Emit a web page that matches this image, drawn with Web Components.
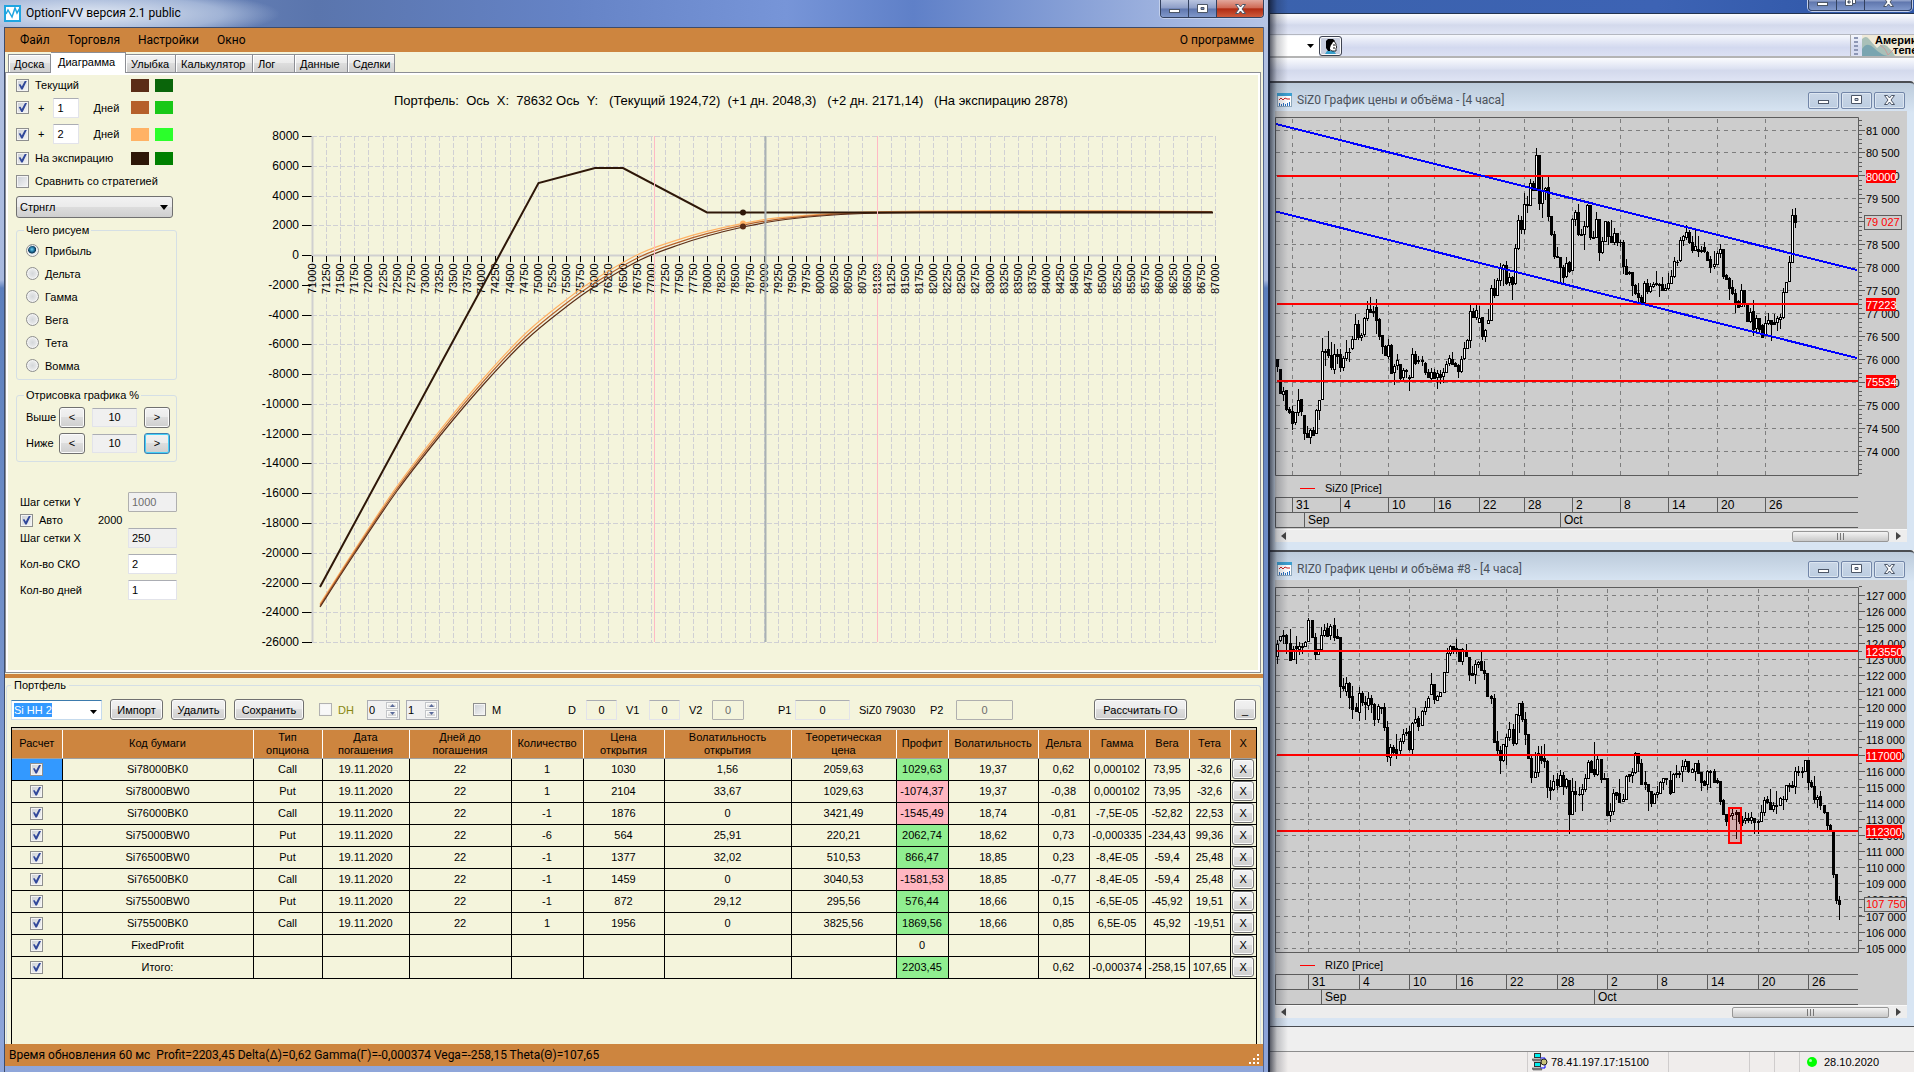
<!DOCTYPE html>
<html lang="ru">
<head>
<meta charset="utf-8">
<title>OptionFVV</title>
<style>
html,body{margin:0;height:100%;background:#efefef;overflow:hidden}
body{font:11px/14px "Liberation Sans",Arial,sans-serif;color:#000}
</style>
</head>
<body>
<trade-desktop></trade-desktop>
<script>
const BASE = `
*{box-sizing:border-box}
button,input,select{font:inherit;color:inherit;margin:0}
button{height:21px;padding:0 2px;border:1px solid #707070;border-radius:3px;background:linear-gradient(#f2f2f2,#ebebeb 48%,#dddddd 50%,#cfcfcf);box-shadow:inset 0 0 0 1px #fbfbfb;text-align:center;white-space:nowrap}
input[type=text]{height:20px;border:1px solid #e2e3ea;border-top-color:#abadb3;background:#fff;padding:0 3px;border-radius:1px;min-width:0}
input[readonly]{background:#f0f0f0}
input[disabled]{background:#f0f0f0;border-color:#afafaf;color:#6d6d6d}
input[type=checkbox]{appearance:none;flex:none;width:13px;height:13px;border:1px solid #8e8f8f;background:linear-gradient(135deg,#cbcfd5,#f6f6f6);box-shadow:inset 0 0 0 1px #f4f4f4;display:grid;place-items:center}
input[type=checkbox]:checked::before{content:"";width:9px;height:9px;background:#30479a;clip-path:polygon(8% 45%,28% 42%,42% 66%,78% 0,100% 0,52% 100%,36% 100%)}
input[type=checkbox]:disabled{background:#f8f8f8;border-color:#b1b1b1}
input[type=radio]{appearance:none;flex:none;width:13px;height:13px;border:1px solid #8e8f8f;border-radius:50%;background:radial-gradient(#d4d7da,#f7f7f7);box-shadow:inset 0 0 0 1px #f4f4f4}
input[type=radio]:checked{background:radial-gradient(circle at 45% 40%,#6fd2f5 0,#1c6a94 28%,#0b3350 42%,#e8eef2 50%)}
`;
function component(tag, css, render, after){
  customElements.define(tag, class extends HTMLElement{
    constructor(){super();this.attachShadow({mode:"open"})}
    connectedCallback(){
      this.shadowRoot.innerHTML = `<style>${BASE}${css}</style>` + (typeof render==="function"?render(this):render);
      if(after) after(this);
    }
  });
}

/* ---------- small controls ---------- */
component("win-check", `:host{display:inline-flex}label{display:flex;align-items:center;gap:6px;white-space:nowrap}.off{color:#87870f}`, el=>
  `<label class="${el.hasAttribute("off")?"off":""}"><input type="checkbox" ${el.hasAttribute("on")?"checked":""} ${el.hasAttribute("off")?"disabled":""}><slot></slot></label>`);

component("value-field", `:host{display:inline-flex}label{display:flex;align-items:center;justify-content:space-between;width:100%;white-space:nowrap}
 input[type=text]{width:var(--w,49px);text-align:var(--align,left);background:var(--fill,#fff)}`, el=>
  `<label><slot></slot><input type="text" value="${el.getAttribute("value")}" ${el.getAttribute("state")||""}></label>`);

component("spin-box", `:host{display:inline-flex;width:33px;height:20px;border:1px solid #abadb3;background:#f0f0f0}
 input[type=text]{flex:1;width:10px;height:18px;border:0;padding:0 1px;background:none}
 .b{display:flex;flex-direction:column;width:14px;gap:1px;padding:1px}
 .b button{flex:1;height:auto;padding:0;border-radius:0;border-color:#c3c5c9;display:grid;place-items:center}
 svg{display:block}`, el=>
  `<input type="text" aria-label="${el.getAttribute("label")}" value="${el.getAttribute("value")}"><div class="b"><button aria-label="+"><svg width="5" height="3"><path d="M0 3L2.5 0L5 3z" fill="#5a6a9a"/></svg></button><button aria-label="-"><svg width="5" height="3"><path d="M0 0L2.5 3L5 0z" fill="#5a6a9a"/></svg></button></div>`);

/* ---------- caption buttons ---------- */
const G_MIN = '<svg width="13" height="12"><rect x="1.5" y="6.500" width="10" height="3" fill="#fff" stroke="#4c5667"/></svg>';
const G_MAX = '<svg width="13" height="12"><path d="M1.500 1.500h10v8h-10z M5 4.500h3v2h-3z" fill="#fff" fill-rule="evenodd" stroke="#4c5667"/></svg>';
const G_REST = '<svg width="13" height="12"><path d="M4.500 .5h7v7h-7z" fill="#fff" stroke="#4c5667"/><path d="M1.500 2.500h7v7h-7z M4 5h2v2h-2z" fill="#fff" fill-rule="evenodd" stroke="#4c5667"/></svg>';
const G_X = '<svg width="13" height="12"><path d="M1.500 1.500h3l2 2.500l2-2.500h3l-3.500 4.500l3.500 4.500h-3l-2-2.500l-2 2.500h-3l3.500-4.500z" fill="#fff" stroke="#4c5667"/></svg>';
component("caption-buttons", `:host{display:flex}
 button{display:grid;place-items:center;padding:0}
 .aero{display:flex;height:18px;border:1px solid #33415f;border-top:0;border-radius:0 0 4px 4px;overflow:hidden;box-shadow:0 0 0 1px #c3d0ec}
 .aero button{height:17px;border:0;border-radius:0;width:28px;background:linear-gradient(#b9c5e0,#8c9dc7 48%,#5f76ad 52%,#8098cb);box-shadow:none;border-right:1px solid #33415f}
 .aero button:last-child{width:46px;border:0}
 .aero button.red{background:linear-gradient(#e2a79b,#cf6a55 46%,#b02b13 52%,#cf5b3c)}
 .mdi{display:flex;gap:2px}
 .mdi button{width:31px;height:17px;border:1px solid #7286a8;border-radius:2px;background:linear-gradient(#c9d6e6,#bccde1);box-shadow:inset 0 0 0 1px #dce6f1}`, el=>{
  const k = el.getAttribute("kind");
  return `<div class="${k==="mdi"?"mdi":"aero"}"><button aria-label="Свернуть">${G_MIN}</button><button aria-label="Развернуть">${k==="back"?G_REST:G_MAX}</button><button aria-label="Закрыть" class="${k==="main"?"red":""}">${G_X}</button></div>`;});

/* ---------- payoff diagram ---------- */
function smooth(p){
  let d=`M${p[0]}`;
  for(let i=0;i<p.length-1;i++){
    const a=p[i-1]||p[i],b=p[i],c=p[i+1],e=p[i+2]||c;
    d+=`C${b[0]+(c[0]-a[0])/6} ${b[1]+(c[1]-a[1])/6} ${c[0]-(e[0]-b[0])/6} ${c[1]-(e[1]-b[1])/6} ${c[0]} ${c[1]}`;
  }
  return d;
}
component("payoff-chart", `:host{display:block;min-width:0;min-height:0}svg{display:block;width:100%;height:100%}text{font-size:12px;white-space:pre}.x{font-size:11px}.t{font-size:13px}`, ()=>{
  const X=v=>312+(v-71000)/250*14.115, Y=v=>136+(8000-v)/2000*29.77;
  let s='';
  for(let v=71000;v<=87000;v+=250) s+=`<path d="M${Math.round(X(v))+.5} 136V642" stroke="#d0d0d4" stroke-dasharray="5 2"/>`;
  for(let v=8000;v>=-26000;v-=2000){const y=Math.round(Y(v))+.5;
    s+=`<path d="M312 ${y}H1216" stroke="#d0d0d4" stroke-dasharray="5 2"/><path d="M302 ${y}H312" stroke="#000"/><text x="299" y="${y+3.5}" text-anchor="end">${v}</text>`;}
  s+=`<path d="M312.500 136V642M312 255.500H1216" stroke="#d0d0d0" stroke-width="2"/>`;
  for(let v=71000;v<=87000;v+=250){const x=Math.round(X(v))+.5;
    s+=`<path d="M${x} 256V262" stroke="#000"/><text class="x" transform="translate(${x+3.5} 294) rotate(-90)">${v}</text>`;}
  const now=[[320,607],[355,553],[397,491],[439,437],[483,385],[526,340],[566,307],[594,287],[640,260],[680,244.5],[707,236],[743,227],[775,221],[820,216],[864,213.5],[920,212.5],[1035,212],[1212,212]];
  const gap=x=>x<520?3+(x-320)*.02:x<620?7:x<900?Math.max(1.5,7-(x-620)*.027):x<1040?1.5:.3;
  const p1=now.map(([x,y])=>[x,y-gap(x)/2]);
  const p2=now.map(([x,y])=>[x,y-gap(x)]);
  s+=`<g fill="none"><path d="${smooth(p2)}" stroke="#ffb265" stroke-width="1.200"/><path d="${smooth(p1)}" stroke="#b5602b" stroke-width="1.200"/><path d="${smooth(now)}" stroke="#5a2d17" stroke-width="1.200"/>
   <path d="M320 587L538.500 183L595 168H623L707 212.500H1213" stroke="#2e1708" stroke-width="2"/></g>
   <path d="M654.500 136V642M877.500 136V642" stroke="#ffb9c4"/><path d="M765.500 136V642" stroke="#a9b1b3" stroke-width="2"/>
   <circle cx="743" cy="223.500" r="3" fill="#ffb265"/><circle cx="743" cy="226.500" r="3" fill="#5a2d17"/><circle cx="743" cy="212.500" r="3" fill="#2e1708"/>
   <text class="t" x="394" y="105">Портфель:  Ось  X:  78632 Ось  Y:   (Текущий 1924,72)  (+1 дн. 2048,3)   (+2 дн. 2171,14)   (На экспирацию 2878)</text>`;
  return `<svg viewBox="180 75 1077 594" preserveAspectRatio="xMinYMin meet">${s}</svg>`;
});

/* ---------- candle charts ----------
   Each bar: fill flag, high, body top, body bottom, low in third-pixel units; "+" widens the step by one pixel. */
const SI = `b657 657 678 697,b687 687 760 763,w742 754 764 783,b750 750 808 815,b802 808 816 824,b798 815 850 872,w817 817 848 857,w747 780 817 828,b777 777 815 830,b825 825 880 900,b858 880 892 895,w868 870 892 912,b861 870 886 888,w807 812 880 882,w780 782 811 840,w594 634 779 779,b627 634 636 680,b573 627 647 655,b606 645 682 690,w612 643 687 702,b627 642 648 673,b627 642 682 696,w650 655 682 695,w600 637 655 665,b625 636 638 668,w588 598 626 630,w522 553 598 602,b540 552 593 600,w579 586 591 603,w531 535 583 591,w483 508 536 543,b471 507 516 520,b500 513 516 531,b477 502 540 582,b535 537 590 600,b585 585 620 642,b617 618 647 650,w597 615 648 657,b612 615 700 702,w672 680 697 735,w642 661 676 690,b672 673 715 720,w685 691 711 725,b688 690 694 714,b705 711 716 753,w624 643 712 715,b633 642 671 675,b650 660 665 672,+,b650 662 665 680,b667 669 697 705,b687 696 712 715,w685 698 714 720,b687 698 715 718,w690 701 712 747,b690 702 711 732,w685 698 708 730,w663 672 696 700,w645 656 671 680,b637 657 672 676,b666 671 678 682,b674 676 695 714,w648 657 695 700,w606 626 655 660,w597 600 625 628,w494 513 601 625,b504 513 532 535,w490 510 531 542,w500 535 546 550,b532 533 590 601,w567 571 589 606,w507 542 550 552,w435 446 541 545,b417 444 467 475,w414 420 467 470,w370 385 420 440,w372 376 388 440,b363 375 429 437,w400 412 428 440,b408 411 432 480,w312 325 431 435,w225 241 325 330,b228 240 267 282,w159 193 269 283,b168 193 196 220,w117 130 196 198,b125 131 150 153,w24 46 150 152,b45 45 190 210,w108 150 190 234,w141 144 152 180,b108 141 228 244,b228 228 284 290,b273 283 350 357,b321 348 352 356,b351 351 382 430,b375 382 411 432,w351 370 410 415,b364 366 393 400,w234 238 391 393,w210 217 238 258,b192 218 284 288,b268 282 285 285,w243 259 284 330,w192 196 260 264,b195 195 293 300,b275 292 296 297,w216 238 292 295,b237 237 338 363,w291 304 338 344,w243 244 304 307,b244 246 290 315,b240 289 307 310,w264 280 307 316,b279 280 308 320,b302 306 308 322,b302 306 380 402,b357 378 402 406,b393 397 399 405,b396 397 436 468,b433 436 461 465,b430 460 472 488,b465 471 487 490,w423 430 486 490,b417 431 455 462,w429 439 453 460,w426 433 440 444,b393 430 434 440,b430 433 435 471,b411 433 452 455,w433 446 451 453,w399 430 445 450,w390 409 430 434,w351 364 409 414,b360 366 368 380,w291 301 361 366,w285 290 301 318,w255 277 291 300,b270 277 308 312,b290 307 331 340,w267 319 331 333,b288 329 333 353,b320 330 334 340,b306 322 335 340,b333 336 360 362,b350 357 381 399,+,w333 373 380 387,w333 341 372 375,w312 329 341 354,b327 327 408 417,b402 407 417 418,b413 414 444 480,b420 442 461 465,b447 460 486 519,b480 484 503 504,w432 451 498 500,b450 450 493 502,b490 493 545 548,w504 518 545 550,b480 514 567 588,w525 535 565 580,b534 534 568 582,b552 555 591 592,w528 550 583 588,w519 541 551 555,b540 541 552 603,b522 548 552 554,w528 535 548 573,w522 532 537 567,w444 458 532 537,w426 428 457 460,w348 367 425 427,w207 226 367 370,b204 225 246 264`;
const RI_A = `w90 103 140 162,w78 79 92 97,b60 75 78 102,b73 75 101 132,+,b57 99 150 153,w108 118 147 149,b78 110 116 162,w96 110 118 135,w100 108 111 132,w93 97 110 112,w24 31 95 97,+,b30 30 82 84,b69 81 132 150,w117 119 133 135,w51 76 118 120,w42 60 76 81,b39 54 78 82,w43 50 77 90,+,b24 47 82 93,b57 80 84 88,b81 81 228 264,b204 228 234 243,w201 219 243 258,b216 219 262 297,b228 260 297 327,+,b279 292 305 308,w231 250 308 333,b243 249 277 290,b258 276 284 330,w246 264 286 300,b255 266 283 309,b281 282 327 348,+,w282 290 327 340,b291 292 294 312,b279 292 353 363,b333 351 440 456,w402 412 442 468,b405 411 426 438,b374 418 432 447,+,w384 393 421 432,w357 374 394 402,w354 366 371 380,b348 364 418 424,w336 340 418 433,w294 328 338 344,b318 324 350 363,+,w300 304 347 348,w273 292 305 316,w258 264 292 294,w189 222 254 255,b222 222 268 282,w255 258 270 273,w246 247 260 261,+,w187 187 247 250,w114 130 187 189,w105 109 129 138,b108 108 120 132,b87 116 120 132,b117 118 155 158,w114 118 155 165,+,b102 122 138 142,b141 141 192 213,b168 190 195 197,w150 163 193 222,w155 158 164 176,b126 155 182 185,b154 180 190 210,b189 190 260 262,+,b255 258 264 282,b252 264 398 400,b363 393 422 440,b408 420 452 492,w402 404 452 458,w372 382 408 465,w336 359 382 393,+,b343 357 400 408,w312 314 400 405,w279 280 315 369,b273 279 328 336,b306 328 374 405,b372 373 446 448,b440 444 503 519,+,w426 488 502 505,w408 430 488 503,b408 432 452 462,b402 445 454 476,b450 453 533 564,b510 532 542 570,w495 514 539 545,+,b489 508 526 540`;
const RI_B = `w240 255 288 290,b248 255 290 315,w265 268 290 297,b270 272 374 432,w264 304 374 375,b273 304 313 366,+,b291 312 314 320,w282 299 313 363,w252 265 298 308,w210 216 265 267,b210 213 247 249,b156 238 253 261,w198 208 253 258,+,b207 207 268 279,b249 265 269 272,b264 264 377 380,w339 365 376 396,w297 311 363 375,b306 307 315 330,b267 309 336 339,+,w312 328 334 335,w255 259 328 330,b252 254 258 276,w234 246 257 280,w186 190 248 252,b189 189 221 246,b207 220 282 285,+,b243 277 284 300,b282 283 305 363,b303 304 340 351,w309 313 341 343,w288 308 314 324,w273 277 309 314,w264 266 278 300,b264 265 268 286,+,b243 270 311 315,w250 252 308 310,b225 250 254 265,b243 249 252 264,w210 230 245 276,w207 214 230 240,b213 214 245 250,+,w234 238 246 250,w219 220 245 273,b210 220 249 252,b246 247 276 303,b270 274 286 290,w240 244 283 300,b240 243 248 294,+,b237 245 276 278,b265 272 276 282,b273 274 333 345,b327 331 373 375,b372 373 393 408,b365 375 380 394,w357 370 377 390,+,b360 368 372 447,b366 368 393 402,b380 390 398 408,w366 385 392 404,b369 386 392 399,w366 383 390 402,b384 386 398 432,+,b390 394 398 432,w345 368 394 396,w321 331 368 378,b318 329 338 342,b297 336 358 360,w336 346 359 366,b303 345 348 372,+,w321 325 346 347,b318 327 329 362,w285 286 328 336,b280 285 289 308,b273 285 291 294,w231 244 290 312,b228 243 247 258,+,b231 244 247 264,w210 212 244 247,b210 211 278 300,b270 277 289 294,b258 289 328 339,w315 322 328 354,b303 320 346 360,+,b345 346 368 372,b366 367 406 420,b402 405 422 425,b420 425 552 564,b552 553 632 642,b618 630 644 690`;
function bars(src,x0,y0){
  let x=x0, lines='', black='', white='';
  for(const t of src.split(',')){
    if(t==='+'){x+=1;continue}
    const [h,a,b,l]=t.slice(1).split(' ').map(v=>y0+Math.floor(v/3));
    lines+=`M${x+.5} ${h}V${l}`;
    black+=`M${x-1} ${a}h3v${Math.max(1,b-a+1)}h-3z`;
    if(t[0]==='w'&&b-a>1) white+=`M${x} ${a+1}h1v${b-a-1}h-1z`;
    x+=3;
  }
  return `<path d="${lines}" stroke="#000" fill="none"/><path d="${black}"/><path d="${white}" fill="#fff"/>`;
}
const sp = n => String(n).replace(/(\d{3})$/,' $1');
const SERIES = {
  si:{view:[1275,111,632,418],top:117,bot:475,p0:81000,p1:74000,step:500,minor:100,y0:130.5,dy:22.93,
    grid:[1292,1340,1388,1434,1479,1524,1572,1620,1668,1717,1765],
    red:[[176,'80000'],[304,'77223'],[381,'75534']],
    now:[222,'79 027',38],months:[[1304,'Sep'],[1560,'Oct']],name:'SiZ0 [Price]',
    extra:'<path d="M1276 124L1857 270M1276 211.500L1857 358" stroke="#00f" stroke-width="2" fill="none" shape-rendering="crispEdges"/>',
    candles:()=>bars(SI,1277,140)},
  ri:{view:[1275,580,632,425],top:587,bot:952,p0:127000,p1:105000,step:1000,minor:500,y0:595.5,dy:16.05,
    grid:[1308,1359,1409,1456,1506,1557,1607,1657,1707,1758,1808],
    red:[[651,'123550'],[755,'117000'],[831,'112300']],
    now:[904,'107 750',43],months:[[1321,'Sep'],[1594,'Oct']],name:'RIZ0 [Price]',
    extra:'<rect x="1729" y="808" width="12" height="35" fill="#f00" fill-opacity=".15" stroke="#f00" stroke-width="2"/>',
    candles:()=>bars(RI_A,1277,610)+bars(RI_B,1560,690)}
};
const DAYS=['31','4','10','16','22','28','2','8','14','20','26'];
component("price-chart", `:host{display:block;flex:1;min-height:0;background:#cdcdcd}svg{display:block;width:100%;height:100%}text{font-size:12px}.p{font-size:11px}`, el=>{
  const c=SERIES[el.getAttribute("series")];
  let s='';
  for(const x of c.grid) s+=`<path d="M${x+.5} ${c.top+2}V${c.bot}" stroke="#7d7d7d" stroke-dasharray="4 4"/>`;
  for(let p=c.p0,i=0;p>=c.p1;p-=c.step,i++){const y=Math.round(c.y0+i*c.dy)-.5;
    s+=`<path d="M1276 ${y}H1858" stroke="#7d7d7d" stroke-dasharray="4 4"/><path d="M1859 ${y}h6" stroke="#5c5c5c"/><text class="p" x="1866" y="${y+4}">${sp(p)}</text>`;}
  const m=c.dy*c.minor/c.step;
  for(let y=c.y0-Math.floor((c.y0-c.top)/m)*m;y<c.bot;y+=m) s+=`<path d="M1859 ${Math.round(y)-.5}h3" stroke="#5c5c5c"/>`;
  s+=`<path d="M1275.500 ${c.top+.5}H1858.500V${c.bot+.5}H1275.500z" fill="none" stroke="#5c5c5c"/>`;
  s+=c.candles();
  for(const [y,t] of c.red) s+=`<path d="M1277 ${y}H1858" stroke="#f00" stroke-width="2"/><rect x="1866" y="${y-6}" width="${t.length*6}" height="13" fill="#f00"/><text class="p" x="1866" y="${y+5}" fill="#fff">${t}</text>`;
  s+=c.extra;
  const [ny,nt,nw]=c.now;
  s+=`<rect x="1864.500" y="${ny-6.5}" width="${nw-1}" height="14" fill="#cdcdcd" stroke="#5c5c5c"/><text class="p" x="1866" y="${ny+4}" fill="#f00">${nt}</text>`;
  const b=c.bot;
  s+=`<path d="M1300 ${b+13.5}h15" stroke="#f00"/><text x="1325" y="${b+17}" class="p">${c.name}</text>`;
  s+=`<path d="M1858 ${b+22.5}H1275.500V${b+52.5}H1858M1276 ${b+37.5}H1858" fill="none" stroke="#5c5c5c"/>`;
  c.grid.forEach((x,i)=>s+=`<path d="M${x+.5} ${b+22}v15" stroke="#5c5c5c"/><text x="${x+4}" y="${b+34}">${DAYS[i]}</text>`);
  for(const [x,t] of c.months) s+=`<path d="M${x+.5} ${b+37}v15" stroke="#5c5c5c"/><text x="${x+4}" y="${b+49}">${t}</text>`;
  return `<svg viewBox="${c.view.join(' ')}" preserveAspectRatio="xMinYMin meet">${s}</svg>`;
});

/* ---------- chart child window ---------- */
component("mdi-window", `:host{display:flex;flex-direction:column;min-height:0;border-top:2px solid #4a4d52;border-radius:0 4px 0 0;background:linear-gradient(#bccbdb,#d8e5f3 30px);padding:0 7px 8px 5px}
 header{display:flex;align-items:center;height:28px;padding:0 2px;gap:5px;flex:none;padding-top:6px}
 h2{font:12px/16px Roboto,"Noto Sans",sans-serif;color:#4b525b;margin:0;flex:1}
 .scroll{height:13px;flex:none;display:flex;align-items:center;background:#ededed;border-top:1px solid #f8f8f8;padding:0 6px}
 .track{flex:1;display:flex;justify-content:flex-end;padding:0 7px}
 .thumb{width:var(--thumb);height:11px;border:1px solid #979797;border-radius:2px;background:linear-gradient(#f3f3f3,#dedede 50%,#c9c9c9);display:grid;place-items:center}`, el=>
 `<header><svg width="15" height="14"><rect x=".5" y=".5" width="14" height="13" fill="#fff" stroke="#8fa8bb"/><rect width="15" height="3" fill="#3b9fd0"/><path d="M2 7l2-2l2 2l2-2l2 1h3" stroke="#c22" fill="none"/><path d="M2.500 13v-3M4.500 13v-2M6.500 13v-3M8.500 13v-2M10.500 13v-3M12.500 13v-4" stroke="#2a6fc0"/></svg><h2>${el.getAttribute("caption")}</h2><caption-buttons kind="mdi"></caption-buttons></header>
 <slot></slot><div class="scroll" style="--thumb:${el.getAttribute("thumb")}px"><svg width="5" height="8"><path d="M5 0L0 4L5 8z" fill="#444"/></svg><div class="track"><div class="thumb"><svg width="9" height="7"><path d="M1.500 0v7M4.500 0v7M7.500 0v7" stroke="#777"/></svg></div></div><svg width="5" height="8"><path d="M0 0L5 4L0 8z" fill="#444"/></svg></div>`);

/* ---------- terminal behind ---------- */
component("terminal-window", `:host{display:grid;grid-template-rows:14px 20px 24px 23px 469px 476px minmax(0,1fr) 21px;min-width:0;background:#efefef;position:relative;overflow:hidden}
 .title{background:linear-gradient(90deg,#3b62ad,#3d63b4 60%,#2d55a6);display:flex;justify-content:flex-end;border-bottom:1px solid #24344f;padding-right:2px}
 .title caption-buttons{margin-top:-7px;height:18px}
 .band{background:linear-gradient(#fbfcfe,#dde2f2 45%,#d3d9ec 55%,#dfe4f4)}
 .tools{display:flex;align-items:center;border-top:1px solid #b4b7c0;border-bottom:2px solid #b4b4b4;background:linear-gradient(#f6f8fd,#dbe0f2 45%,#d3d9ef 60%,#dce1f3)}
 .cb{display:flex;align-items:center;background:#fff;justify-content:flex-end;width:49px;height:20px}
 .cb svg{margin-right:5px}
 .who{width:23px;height:20px;display:grid;place-items:center;padding:0;border-color:#3e4250;background:#c9cfdf}
 .ad{margin-left:auto;display:flex;align-items:center;border-left:1px solid #aaa;height:100%;width:64px}
 .ad .grip{width:4px;height:18px;margin:0 4px 0 3px;background:repeating-linear-gradient(#8d97b5 0 2px,transparent 2px 4px)}
 .banner{position:relative;width:52px;height:21px;overflow:hidden;background:#efe9d8}
 .banner svg{display:block}
 .banner p{margin:0;position:absolute;left:13px;top:0;font:bold 11px/10px "Liberation Sans",sans-serif;white-space:nowrap}
 .banner span{display:block;height:10px}.banner span+span{padding-left:18px}
 .status{display:flex;border-top:1px solid #8d8d8d;background:#f0edec;align-items:stretch}
 .status>div{border-left:1px solid #cfcccc;display:flex;align-items:center;gap:3px;padding-left:4px;white-space:nowrap}
 .gap{border-top:1px solid #4a4d52}
 :host::after{content:"";position:absolute;left:0;top:0;bottom:0;width:18px;pointer-events:none;background:linear-gradient(90deg,rgba(10,15,30,.65),rgba(20,25,40,.22) 7px,transparent)}`,
 `<div class="title"><caption-buttons kind="back"></caption-buttons></div><div class="band"></div>
 <div class="tools"><div class="cb"><svg width="7" height="4"><path d="M0 0h7L3.500 4z"/></svg></div>
 <button class="who" aria-label="Клиент"><svg width="16" height="16"><path d="M2 16l2-3h7l2 3z" fill="#38a0cc"/><path d="M6 3h5l2 3v2l1 1l-1 1v3h-4l-3-2z" fill="#fff" stroke="#000" stroke-width=".8"/><path d="M3 3l2-2h5l2 2l-2 1l-1 2l-1 1l-1 3v3l-2 0l-2-3z"/><path d="M10 7h2M10 10h2" stroke="#000"/></svg></button>
 <div class="ad"><span class="grip"></span><div class="banner"><svg width="52" height="21"><path d="M0 4q4-4 7 0t8 9q5-6 10-2t8 10H0z" fill="#a9c0b8"/><path d="M0 14q5-8 12-1t14 8H0z" fill="#7aa5b0"/><path d="M18 10l5 4l3 6l6-6" stroke="#c99" fill="none"/></svg><p><span>Америка</span><span>теперь</span></p></div></div></div>
 <div class="band"></div>
 <mdi-window caption="SiZ0 График цены и объёма - [4 часа]" thumb="97"><price-chart series="si"></price-chart></mdi-window>
 <mdi-window caption="RIZ0 График цены и объёма #8 - [4 часа]" thumb="157"><price-chart series="ri"></price-chart></mdi-window>
 <div class="gap"></div>
 <div class="status"><div style="flex:1;border:0"></div>
 <div style="width:141px"><svg width="16" height="18"><path d="M8 5h5v10h-5" fill="none" stroke="#00f"/><rect x="2.500" y=".5" width="6" height="4" fill="#0ee" stroke="#333"/><path d="M0 6h9l1 2H1z" fill="#888" stroke="#333" stroke-width=".5"/><rect x="2.500" y="9.500" width="6" height="4" fill="#0ee" stroke="#333"/><path d="M0 15h9l1 2H1z" fill="#888" stroke="#333" stroke-width=".5"/><circle cx="12" cy="9" r="3" fill="#c9c27a" stroke="#222"/></svg>78.41.197.17:15100</div>
 <div style="width:81px"></div><div style="width:25px"></div><div style="width:25px"></div>
 <div style="width:115px;padding-left:7px;gap:7px"><svg width="10" height="10"><circle cx="5" cy="5" r="5" fill="#0f0"/><circle cx="3.500" cy="3.500" r="1.500" fill="#aaffaa"/></svg>28.10.2020</div></div>`);

/* ---------- chart settings column ---------- */
const swatch=(a,b)=>`<span class="sw"><i style="background:${a}"></i><i style="background:${b}"></i></span>`;
component("chart-settings", `:host{display:block;width:171px;padding-left:7px;flex:none}
 .r{display:flex;align-items:center;height:var(--h)}
 .sw{display:flex;gap:6px;margin-left:auto;margin-right:7px}
 .sw i{width:18px;height:13px}
 .d{display:flex;gap:14px;align-items:center;margin-left:9px}
 .d input[type=text]{width:26px}
 select{width:157px;height:22px;margin:2px 0 5px;display:block;appearance:none;border:1px solid #707070;border-radius:3px;padding:0 3px;background:linear-gradient(#f2f2f2,#ebebeb 48%,#dddddd 50%,#cfcfcf)}
 .sel{position:relative}.sel svg{position:absolute;right:12px;top:9px}
 fieldset{border:1px solid #d5dfe5;border-radius:3px;margin:0;width:161px;min-width:0}
 legend{padding:0 2px;margin-left:7px;height:14px}
 .rad{height:157px;padding:2px 0 0}
 .rad label{display:flex;align-items:center;gap:6px;height:23px;padding-left:9px}
 .pct{margin-top:8px;padding:2px 0 5px;height:74px}
 .pct div{display:flex;align-items:center;height:26px;padding-left:9px}
 .pct button{width:26px}.pct span{width:33px}
 .pct input{width:45px;margin:0 7px;text-align:center;height:19px}
 .focus{border-color:#3c7fb1;box-shadow:inset 0 0 0 1px #46d0f7}
 .grid{margin:30px 0 0 4px;width:157px}
 .grid value-field{width:157px;display:flex}
 .grid value-field+value-field{margin-top:6px}`,
 `<div class="r" style="--h:20px"><win-check on>Текущий</win-check>${swatch('#5a2d17','#0a650a')}</div>
 <div class="r" style="--h:25px"><win-check on>&nbsp;+</win-check><label class="d"><input type="text" value="1">Дней</label>${swatch('#b5602b','#18c818')}</div>
 <div class="r" style="--h:28px"><win-check on>&nbsp;+</win-check><label class="d"><input type="text" value="2">Дней</label>${swatch('#ffb265','#2bff2b')}</div>
 <div class="r" style="--h:20px"><win-check on>На экспирацию</win-check>${swatch('#2e1708','#008000')}</div>
 <div class="r" style="--h:26px"><win-check>Сравнить со стратегией</win-check></div>
 <div class="sel"><select aria-label="Стратегия"><option>Стрнгл</option></select><svg width="8" height="5"><path d="M0 0h8L4 5z"/></svg></div>
 <fieldset class="rad"><legend>Чего рисуем</legend>${['Прибыль','Дельта','Гамма','Вега','Тета','Вомма'].map((t,i)=>`<label><input type="radio" name="g" ${i?'':'checked'}>${t}</label>`).join('')}</fieldset>
 <fieldset class="pct"><legend>Отрисовка графика %</legend>
 <div><span>Выше</span><button>&lt;</button><input type="text" readonly value="10" aria-label="Выше"><button>&gt;</button></div>
 <div><span>Ниже</span><button>&lt;</button><input type="text" readonly value="10" aria-label="Ниже"><button class="focus">&gt;</button></div></fieldset>
 <div class="grid"><value-field value="1000" state="disabled" style="--fill:#f0f0f0">Шаг сетки Y</value-field>
 <div class="r" style="--h:16px"><win-check on>Авто</win-check><span style="margin-left:35px">2000</span></div>
 <value-field value="250" state="readonly" style="--fill:#f0f0f0">Шаг сетки X</value-field>
 <value-field value="2">Кол-во СКО</value-field><value-field value="1">Кол-во дней</value-field></div>`);

/* ---------- positions table ---------- */
const COLS=[['Расчет',50],['Код бумаги',191],['Тип<br>опциона',69],['Дата<br>погашения',87],['Дней до<br>погашения',102],['Количество',72],['Цена<br>открытия',81],['Волатильность<br>открытия',127],['Теоретическая<br>цена',105],['Профит',52],['Волатильность',90],['Дельта',51],['Гамма',56],['Вега',44],['Тета',41],['X',26]];
const ROWS=`Si78000BK0|Call|19.11.2020|22|1|1030|1,56|2059,63|1029,63|19,37|0,62|0,000102|73,95|-32,6
Si78000BW0|Put|19.11.2020|22|1|2104|33,67|1029,63|-1074,37|19,37|-0,38|0,000102|73,95|-32,6
Si76000BK0|Call|19.11.2020|22|-1|1876|0|3421,49|-1545,49|18,74|-0,81|-7,5E-05|-52,82|22,53
Si75000BW0|Put|19.11.2020|22|-6|564|25,91|220,21|2062,74|18,62|0,73|-0,000335|-234,43|99,36
Si76500BW0|Put|19.11.2020|22|-1|1377|32,02|510,53|866,47|18,85|0,23|-8,4E-05|-59,4|25,48
Si76500BK0|Call|19.11.2020|22|-1|1459|0|3040,53|-1581,53|18,85|-0,77|-8,4E-05|-59,4|25,48
Si75500BW0|Put|19.11.2020|22|-1|872|29,12|295,56|576,44|18,66|0,15|-6,5E-05|-45,92|19,51
Si75500BK0|Call|19.11.2020|22|1|1956|0|3825,56|1869,56|18,66|0,85|6,5E-05|45,92|-19,51
FixedProfit||||||||0|||||
Итого:||||||||2203,45||0,62|-0,000374|-258,15|107,65`.split('\n').map(r=>r.split('|'));
component("positions-table", `:host{display:block;flex:1;min-height:0;border:1px solid #000;border-bottom:0;overflow:hidden}
 table{width:100%;table-layout:fixed;border-collapse:collapse;text-align:center}
 th{background:#cd853f;font-weight:normal;height:29px;padding:0;line-height:13px;border-right:1px solid #fff;border-top:2px solid #d9d2c0;border-bottom:1px solid #a0a0a0}
 th:last-child{border-right:0}
 td{height:22px;padding:0;border:1px solid #000;border-top:0;white-space:nowrap}
 td:first-child{border-left:0}td:last-child{border-right:0}
 tr.cur td:first-child{background:#3399ff}
 td input[type=checkbox]{margin:0 auto}
 td button{width:22px;height:20px;padding:0;display:block;margin:0 auto}
 .up{background:#90ee90}.dn{background:#ffb6c1}`, ()=>
 `<table><colgroup>${COLS.map(c=>`<col style="width:${c[1]}px">`).join('')}</colgroup><thead><tr>${COLS.map(c=>`<th scope="col">${c[0]}</th>`).join('')}</tr></thead><tbody>${
 ROWS.map((r,n)=>`<tr class="${n?'':'cur'}"><td><input type="checkbox" checked aria-label="${r[0]}"></td>${r.map((v,i)=>`<td${i===8&&v!=='0'?` class="${v[0]==='-'?'dn':'up'}"`:''}>${v}</td>`).join('')}<td><button>X</button></td></tr>`).join('')}</tbody></table>`);

/* ---------- portfolio ---------- */
component("portfolio-panel", `:host{display:flex;flex-direction:column;flex:1;min-height:0;padding:0 2px 0 1px}
 fieldset{flex:1;min-height:0;min-width:0;margin:0;padding:0 3px 0 4px;border:1px solid #d5dfe5;border-bottom:0;border-radius:3px 3px 0 0;display:flex;flex-direction:column}
 legend{padding:0 3px;height:14px}
 .bar{display:flex;align-items:center;height:35px;flex:none}
 .bar>button{margin-right:8px}
 .combo{width:91px;height:20px;margin-right:8px;display:flex;align-items:center;background:#fff;border:1px solid #c5daed;border-top-color:#3d7bad}
 .combo input[type=text]{border:0;flex:1;height:18px;padding:0 2px;color:#fff;background:linear-gradient(#3399ff,#3399ff) 2px 2px/38px 14px no-repeat #fff}
 .combo button{border:0;background:none;box-shadow:none;width:16px;height:18px;padding:0}
 value-field{--align:center;--fill:#f4f4dc}`,
 `<fieldset><legend>Портфель</legend><div class="bar">
 <div class="combo"><input type="text" value="Si HH 2" aria-label="Портфель"><button aria-label="Открыть список"><svg width="7" height="4"><path d="M0 0h7L3.500 4z"/></svg></button></div>
 <button style="width:53px">Импорт</button><button style="width:55px">Удалить</button><button style="width:70px">Сохранить</button>
 <win-check off style="margin-left:7px;width:48px">DH</win-check><spin-box value="0" label="DH 0" style="margin-right:6px"></spin-box><spin-box value="1" label="DH 1"></spin-box>
 <win-check style="margin-left:34px;width:95px">M</win-check>
 <value-field value="0" style="width:49px;--w:31px">D</value-field>
 <value-field value="0" style="width:54px;--w:31px;margin-left:9px">V1</value-field>
 <value-field value="0" state="disabled" style="width:55px;--w:32px;margin-left:9px">V2</value-field>
 <value-field value="0" style="width:72px;--w:55px;margin-left:34px">P1</value-field>
 <span style="margin-left:9px;width:71px">SiZ0 79030</span>
 <value-field value="0" state="disabled" style="width:83px;--w:57px">P2</value-field>
 <button style="width:93px;margin-left:auto;margin-right:47px">Рассчитать ГО</button><button style="width:22px;margin-right:1px">_</button></div>
 <positions-table></positions-table></fieldset>`);

/* ---------- option program window ---------- */
component("option-window", `:host{display:flex;flex-direction:column;min-width:0;min-height:0;padding:0 7px 6px 5px;position:relative;z-index:1;
  background:linear-gradient(90deg,transparent 0 calc(100% - 7px),#52658f calc(100% - 7px) calc(100% - 6px),transparent calc(100% - 6px) calc(100% - 2px),#1c2740 calc(100% - 2px)),linear-gradient(90deg,transparent 4px,#3d4c6c 4px 5px,transparent 5px),linear-gradient(#b3c2e2,#a8b9df 280px,#5c7fbd 288px,#8ba3d8 1000px,#8fa6da)}
 .cap{height:27px;flex:none;display:flex;margin:0 -5px;padding:0 4px;background:radial-gradient(ellipse 190px 26px at 90px 14px,#e2e9f4,rgba(200,214,236,.6) 70%,transparent),linear-gradient(90deg,#7b93c2,#5a75ad 25%,#6583c6 45%,#7795d8 62%,#5f80c8 72%,#9fb3df 92%,#b5c4e6)}
 h1{font:12px/16px Roboto,"Noto Sans",sans-serif;margin:5px auto 0 5px}
 .cap>svg{margin-top:5px}
 .menu{height:25px;flex:none;background:#cd853f;border-top:1px solid #3d4c6c;display:flex;align-items:center;gap:18px;padding:0 9px 0 15px;font:12px/16px Roboto,"Noto Sans",sans-serif}
 .menu a{color:#000;text-decoration:none;white-space:nowrap}.menu a:last-child{margin-left:auto}
 .body{background:#f4f4dc;display:flex;flex-direction:column;flex:1;min-height:0}
 .tabs{display:flex;align-items:flex-end;height:20px;padding-left:3px;flex:none}
 .tabs button{width:var(--w);height:18px;border:1px solid #8c8e94;border-left-width:0;border-bottom:0;border-radius:0;text-align:left;padding:0 5px;box-shadow:inset 1px 1px #fff}
 .tabs button:first-child{border-left-width:1px}
 .tabs .on{height:21px;background:#fff;margin-bottom:-1px;padding:0 0 2px 7px;position:relative;z-index:1}
 .page{height:601px;flex:none;border:1px solid #8c8e94;margin-right:2px;display:flex;box-shadow:inset 0 0 0 2px #fff;padding:2px 3px 3px 3px}
 payoff-chart{flex:1}
 .split{height:4px;flex:none;background:#cd853f;margin-top:1px}
 .status{height:22px;flex:none;background:#cd853f;font:12px/22px Roboto,"Noto Sans",sans-serif;padding:0 2px 0 4px;display:flex;justify-content:space-between;align-items:flex-end;white-space:pre}`,
 `<div class="cap"><svg width="17" height="17"><rect x="1" y="1" width="15" height="15" fill="#fff" stroke="#1fa5e0" stroke-width="2"/><path d="M2 9l2-4l4 7l3-9l2 5l3-5" fill="none" stroke="#1fa5e0" stroke-width="1.500"/></svg><h1>OptionFVV версия 2.1 public</h1><caption-buttons kind="main"></caption-buttons></div>
 <nav class="menu"><a href="#">Файл</a><a href="#">Торговля</a><a href="#">Настройки</a><a href="#">Окно</a><a href="#">О программе</a></nav>
 <div class="body"><div class="tabs">${[['Доска',43],['Диаграмма',75],['Улыбка',50],['Калькулятор',77],['Лог',42],['Данные',53],['Сделки',47]].map(([t,w],i)=>`<button class="${i===1?'on':''}" style="--w:${w}px">${t}</button>`).join('')}</div>
 <div class="page"><chart-settings></chart-settings><payoff-chart></payoff-chart></div>
 <div class="split"></div><portfolio-panel></portfolio-panel>
 <div class="status"><span>Время обновления 60 мс  Profit=2203,45 Delta(Δ)=0,62 Gamma(Γ)=-0,000374 Vega=-258,15 Theta(Θ)=107,65</span><svg width="12" height="14"><path d="M8 2h2v2h-2zM8 6h2v2h-2zM4 6h2v2h-2zM8 10h2v2h-2zM4 10h2v2h-2zM0 10h2v2h-2z" fill="#fff"/></svg></div></div>`);

component("trade-desktop", `:host{display:grid;grid-template-columns:minmax(0,1270fr) minmax(0,644fr);height:100vh}`, `<option-window></option-window><terminal-window></terminal-window>`);
</script>
</body>
</html>
